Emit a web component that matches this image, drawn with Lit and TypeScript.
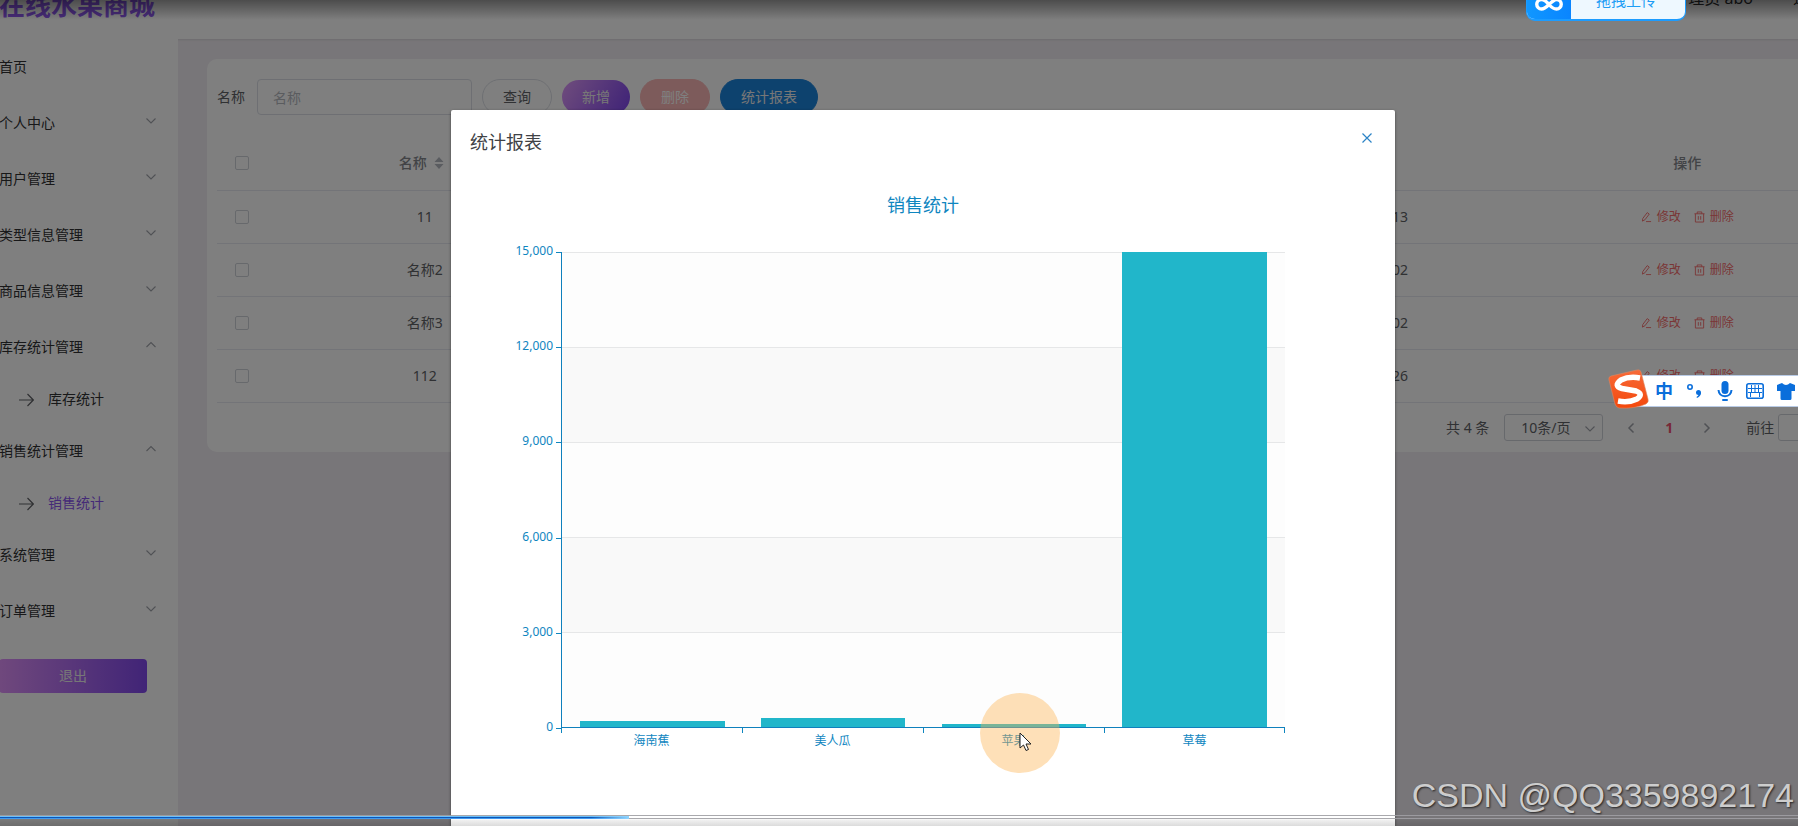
import { LitElement, html, css } from "lit";
import { customElement, property } from "lit/decorators.js";
import { classMap } from "lit/directives/class-map.js";

const FONT = css`"Noto Sans", "Noto Sans CJK SC", sans-serif`;

interface MenuEntry {
  label: string;
  arrow?: "up" | "down";
  child?: string;
  active?: boolean;
}

const MENU: MenuEntry[] = [
  { label: "首页" },
  { label: "个人中心", arrow: "down" },
  { label: "用户管理", arrow: "down" },
  { label: "类型信息管理", arrow: "down" },
  { label: "商品信息管理", arrow: "down" },
  { label: "库存统计管理", arrow: "up", child: "库存统计" },
  { label: "销售统计管理", arrow: "up", child: "销售统计", active: true },
  { label: "系统管理", arrow: "down" },
  { label: "订单管理", arrow: "down" },
];

const ROWS = [
  { name: "11", fruit: "海南蕉", count: 200, date: "2023-04-13" },
  { name: "名称2", fruit: "美人瓜", count: 300, date: "2023-04-02" },
  { name: "名称3", fruit: "苹果", count: 100, date: "2023-04-02" },
  { name: "112", fruit: "草莓", count: 15000, date: "2023-04-26" },
];

const chevron = (dir: string) => html`<svg class="chev" viewBox="0 0 12 12" width="12" height="12">
  <path d=${dir === "up" ? "M1.5 8 6 3.5 10.5 8" : "M1.5 3.5 6 8 10.5 3.5"} fill="none" stroke="#a0a3aa" stroke-width="1.1" />
</svg>`;

@customElement("side-menu")
export class SideMenu extends LitElement {
  static styles = css`
    :host { display: block; width: 179px; flex: none; background: #fff; font: 14px/20px ${FONT}; color: #303133; }
    .item, .sub { display: flex; align-items: center; color: inherit; text-decoration: none; }
    .item { height: 56px; justify-content: space-between; padding-right: 21px; }
    .chev { margin-bottom: 4px; }
    .sub { height: 48px; padding-left: 20px; gap: 14px; }
    .sub svg { margin-top: 2px; }
    .active { color: #8a55ef; }
    .logout { display: block; width: 148px; height: 34px; margin-top: 20px; border: 0; border-radius: 4px; color: #eee;
      font: inherit; background: linear-gradient(90deg, #e091fa, #8249ee); }
  `;
  render() {
    return html`<nav>
        ${MENU.map(
          (m) => html`<a class="item" href="#">${m.label}${m.arrow ? chevron(m.arrow) : ""}</a>
            ${m.child
              ? html`<a class=${classMap({ sub: true, active: !!m.active })} href="#">
                  <svg viewBox="0 0 15 14" width="15" height="14">
                    <path d="M0 7H14M8.500 1 14.300 7 8.500 13" fill="none" stroke="#606266" stroke-width="1.2" />
                  </svg>${m.child}</a>`
              : ""}`
        )}
      </nav>
      <button class="logout">退出</button>`;
  }
}

@customElement("record-table")
export class RecordTable extends LitElement {
  static styles = css`
    :host { display: block; font: 14px/20px ${FONT}; color: #606266; }
    table { width: 100%; table-layout: fixed; border-collapse: collapse; }
    th, td { height: 52px; padding: 0; text-align: center; border-bottom: 1px solid #e6e9f0; }
    th { height: 54px; font-weight: 500; color: #84878d; }
    .pick { width: 50px; }
    .pick input { appearance: none; display: block; width: 14px; height: 14px; margin: 0 auto; border: 1px solid #cfd2d9; border-radius: 2px; background: #fff; }
    .sort { margin-left: 7px; vertical-align: -1px; }
    .sort + span { display: inline-block; width: 7px; }
    .ops { display: flex; justify-content: center; gap: 13px; }
    .ops button { display: flex; align-items: center; gap: 5px; padding: 0; border: 0; background: none; color: #f56c6c; font: 12px/20px ${FONT}; }
  `;
  render() {
    const sort = html`<svg class="sort" viewBox="0 0 10 12" width="10" height="12">
        <path d="M5 0 9.500 5H.5zM5 12 .5 7H9.500z" fill="#b4b8c0" /></svg><span></span>`;
    return html`<table>
      <thead>
        <tr>
          <th class="pick"><input type="checkbox" aria-label="全选" /></th>
          <th>名称${sort}</th><th>水果${sort}</th><th>数量${sort}</th><th>日期</th><th>操作</th>
        </tr>
      </thead>
      <tbody>
        ${ROWS.map(
          (r) => html`<tr>
            <td class="pick"><input type="checkbox" aria-label=${r.name} /></td>
            <td>${r.name}</td><td>${r.fruit}</td><td>${r.count}</td><td>${r.date}</td>
            <td>
              <div class="ops">
                <button>
                  <svg viewBox="0 0 12 12" width="11" height="12" fill="none" stroke="#f56c6c">
                    <path d="M1.500 10.500 2 7.500 6.800 1.200 9 2.800 4.300 9zM5.500 11H11" />
                  </svg>修改
                </button>
                <button>
                  <svg viewBox="0 0 12 12" width="11" height="12" fill="none" stroke="#f56c6c">
                    <path d="M.5 2.500H11.500M3.500 2.500V.5H8.500V2.500M1.500 2.500V11.500H10.500V2.500M4.700 5V9M7.300 5V9" />
                  </svg>删除
                </button>
              </div>
            </td>
          </tr>`
        )}
      </tbody>
    </table>`;
  }
}

@customElement("bar-chart")
export class BarChart extends LitElement {
  @property({ type: Number }) max = 15000;
  @property({ type: Number }) step = 3000;
  static styles = css`
    :host { display: block; font: 12px/16px ${FONT}; color: #0f86bf; }
    h3 { margin: 0; text-align: center; font: 18px/24px ${FONT}; }
    .plot { display: grid; grid-template-columns: 83px 1fr; margin: 35px 110px 0 28px; }
    .scale { position: relative; border-right: 1px solid #0f80bd; }
    .scale span { position: absolute; right: 8px; line-height: 20px; margin-top: -11px; }
    .scale span::after { content: ""; position: absolute; right: -8px; top: 11px; width: 5px; height: 1px; background: #0f86bf; }
    .area { display: grid; grid-auto-rows: 95px; position: relative; border-bottom: 1px solid #0f80bd; }
    .band { border-top: 1px solid #e6e7e8; background: #fdfdfd; }
    .band:nth-child(even) { background: #f9f9f9; }
    .bars { position: absolute; inset: 0; display: flex; align-items: flex-end; }
    .slot { flex: 1; height: 100%; display: flex; align-items: flex-end; justify-content: center; }
    .bar { width: 80%; background: #21b6ca; }
    .names { grid-column: 2; display: flex; margin-left: -1px; }
    .names span { flex: 1; padding-top: 5px; text-align: center; background: linear-gradient(#0f86bf, #0f86bf) 0 0 / 1px 5px no-repeat; }
    .names span:last-child { background: linear-gradient(#0f86bf, #0f86bf) 0 0 / 1px 5px no-repeat, linear-gradient(#0f86bf, #0f86bf) 100% 0 / 1px 5px no-repeat; }
  `;
  render() {
    const n = this.max / this.step;
    const ticks = Array.from({ length: n + 1 }, (_, i) => this.max - i * this.step);
    return html`<h3>销售统计</h3>
      <div class="plot">
        <div class="scale">
          ${ticks.map((t, i) => html`<span style="top:${(i / n) * 100}%">${t.toLocaleString("en-US")}</span>`)}
        </div>
        <div class="area">
          ${ticks.slice(1).map(() => html`<div class="band"></div>`)}
          <div class="bars">
            ${ROWS.map((r) => html`<div class="slot"><div class="bar" style="height:${(r.count / this.max) * 100}%"></div></div>`)}
          </div>
        </div>
        <div class="names">${ROWS.map((r) => html`<span>${r.fruit}</span>`)}</div>
      </div>`;
  }
}

@customElement("ime-bar")
export class ImeBar extends LitElement {
  static styles = css`
    :host { display: flex; align-items: center; height: 30px; padding-left: 37px; gap: 13px; background: #fff;
      border: 1px solid #b9cbe6; border-right: 0; color: #0a6edb; font: bold 18px/30px ${FONT}; }
    .logo { position: absolute; left: -10px; top: -8px; }
    svg { flex: none; }
  `;
  render() {
    return html`
      <svg class="logo" viewBox="0 0 42 42" width="42" height="42">
        <defs><linearGradient id="o" x1="0" y1="0" x2="0" y2="1"><stop offset="0" stop-color="#f76a38" /><stop offset="1" stop-color="#f4480c" /></linearGradient></defs>
        <path d="M3 8 29 2Q32 1 33 4L40 31Q41 34 38 36Q27 41 11 40Q8 39 7 36L1 12Q0 9 3 8Z" fill="url(#o)" stroke="#d98a66" stroke-width=".6" />
        <path d="M32 10Q21 8 13 12Q5 18 14 20.500L28 23Q36 26 29 31Q21 35 10 33" fill="none" stroke="#fff" stroke-width="5.500" />
      </svg>
      <span>中</span>
      <svg viewBox="0 0 18 18" width="18" height="18"><circle cx="4" cy="5" r="2.200" fill="none" stroke="#0a6edb" stroke-width="1.600" /><circle cx="12.500" cy="10.500" r="2.500" fill="#0a6edb" /><path d="M15 10.500Q15 14 11 16L10.500 15Q13 13.500 12.500 12Z" fill="#0a6edb" /></svg>
      <svg viewBox="0 0 16 20" width="16" height="20"><rect x="4.500" y="0" width="7" height="13" rx="3.500" fill="#0a6edb" /><path d="M1.500 9Q2 15 8 15.200 14 15 14.500 9" fill="none" stroke="#0a6edb" stroke-width="2" /><rect x="5" y="18" width="6" height="2" rx="1" fill="#0a6edb" /></svg>
      <svg viewBox="0 0 18 16" width="18" height="16"><rect x=".8" y=".8" width="16.400" height="14.400" rx="2" fill="none" stroke="#0a6edb" stroke-width="1.600" /><path d="M2 5.500H16M2 9.500H16M5.500 2V9.500M9 2V9.500M12.500 2V9.500M4.500 9.500V14M13.500 9.500V14" stroke="#0a6edb" stroke-width="1" /></svg>
      <svg viewBox="0 0 18 17" width="18" height="17"><path d="M0 2 5 0Q9 4 13 0L18 2V8H14.500V15.500Q14.500 17 13 17H5Q3.500 17 3.500 15.500V8H0Z" fill="#0a6edb" /></svg>
    `;
  }
}

@customElement("app-root")
export class AppRoot extends LitElement {
  static styles = css`
    :host { display: block; position: relative; height: 100vh; overflow: hidden; background: #f1edf3; font: 14px/20px ${FONT}; color: #606266; }
    .page { width: calc(100% + 48px); margin: -30px 0 0 -1px; }
    header { display: flex; align-items: center; justify-content: space-between; height: 69px; background: #fff; box-shadow: 0 1px 2px #d8d6da; }
    h1 { margin: 0; font: bold 26px/32px ${FONT}; color: #9058f3; }
    .user { display: flex; gap: 40px; padding: 0 20px 14px 0; font-size: 16px; color: #303133; }
    .body { display: flex; align-items: flex-start; }
    side-menu { height: calc(100vh - 39px); }
    main { flex: 1; min-width: 0; margin: 20px 0 0 29px; }
    .card { padding: 20px 0 11px 10px; background: #fff; border-radius: 10px; }
    form { display: flex; align-items: center; height: 36px; margin-bottom: 21px; }
    label { margin-right: 12px; }
    .text { box-sizing: border-box; width: 215px; height: 36px; padding: 0 15px; border: 1px solid #dcdfe6; border-radius: 4px; font: inherit; background: #fff; }
    .text::placeholder { color: #b5b8bf; opacity: 1; }
    .btn { height: 36px; margin-left: 10px; padding: 0 20px; border: 1px solid #dcdfe6; border-radius: 18px; background: #fff; color: #606266; font: inherit; }
    .add { height: 34px; border: 0; color: #eee; background: linear-gradient(120deg, #e09afa, #7c44ee); }
    .del { border-color: #fab6b6; background: #fab6b6; color: #fff; }
    .stat { border-color: #1b84dc; background: #1b84dc; color: #eee; }
    .pager { display: flex; align-items: center; height: 27px; margin-top: 11px; padding-left: 1229px; }
    .size { box-sizing: border-box; width: 99px; height: 27px; margin: 0 22px 0 15px; padding: 0 16px; border: 1px solid #cfd2d9; border-radius: 3px; background: #fff; appearance: none; font: inherit; color: inherit; }
    .pick { position: relative; }
    .pick svg { position: absolute; right: 29px; top: 9px; }
    .pager button { display: flex; padding: 0; border: 0; background: none; }
    .cur { width: 64px; text-align: center; color: #f0506e; font-weight: bold; }
    .goto { margin: 0 4px 0 33px; }
    .jump { box-sizing: border-box; width: 46px; height: 27px; border: 1px solid #cfd2d9; border-radius: 3px; text-align: center; font: inherit; color: inherit; }

    .mask { position: absolute; inset: 0 -48px 0 0; padding-top: 110px; background: rgba(0, 0, 0, 0.5); }
    .dialog { width: 944px; max-width: 90%; height: 100%; margin: 0 auto; background: #fff; border-radius: 2px 2px 0 0; box-shadow: 0 1px 3px rgba(0, 0, 0, 0.5); }
    .head { display: flex; justify-content: space-between; align-items: center; padding: 20px 22px 0 19px; }
    .head h2 { margin: 0; font: 18px/24px ${FONT}; color: #404246; }
    .close { display: flex; padding: 0 0 8px; border: 0; background: none; }
    bar-chart { margin-top: 39px; }
    .shade { position: absolute; inset: 0 0 auto; height: 20px; background: linear-gradient(rgba(0, 0, 0, 0.4), rgba(0, 0, 0, 0)); }
    .drop { position: absolute; left: 1526px; top: -19px; display: flex; width: 160px; height: 40px; box-sizing: border-box; border: 1px solid #1c9cff; border-bottom-width: 2px; border-radius: 9px; overflow: hidden; background: #eef8ff; color: #1d9df5; font: 15px/36px ${FONT}; padding: 0; }
    .drop span { flex: 1; padding-right: 4px; text-align: center; }
    .drop svg { background: linear-gradient(90deg, #1097ff, #0a85ff); }
    ime-bar { position: absolute; left: 1617px; right: 0; top: 375px; }
    .halo { position: absolute; left: 980px; top: 693px; width: 80px; height: 80px; border-radius: 50%; background: rgba(253, 177, 77, 0.4); }
    .halo svg { position: absolute; left: 39px; top: 39px; }
    .mark { position: absolute; right: 4px; bottom: 11px; color: #cdcdcd; font: 34px/40px "Liberation Sans", sans-serif; text-shadow: 1px 1px 2px rgba(0, 0, 0, 0.7); }
    .seek { position: absolute; inset: auto 0 0; height: 11px; background: linear-gradient(rgba(0, 0, 0, 0) 4px, rgba(0, 0, 0, 0.06) 5px, rgba(0, 0, 0, 0.14)); }
    .track { height: 2px; border: 1px solid rgba(160, 160, 164, 0.9); border-width: 1px 0; }
    .done { width: 35%; height: 3px; background: linear-gradient(90deg, transparent 94%, #8fd4ff), linear-gradient(#6cc0f8 1px, #0c56b8 1px 2px, #3f9af0 2px); }
  `;
  render() {
    return html`
      <div class="page">
        <header><h1>在线水果商城</h1><div class="user"><span>管理员 abo</span><span>退出</span></div></header>
        <div class="body">
          <side-menu></side-menu>
          <main>
            <div class="card">
              <form>
                <label for="q">名称</label><input id="q" class="text" placeholder="名称" />
                <button type="button" class="btn">查询</button>
                <button type="button" class="btn add">新增</button>
                <button type="button" class="btn del">删除</button>
                <button type="button" class="btn stat">统计报表</button>
              </form>
              <record-table></record-table>
              <div class="pager">
                <span>共 4 条</span>
                <span class="pick"><select class="size" aria-label="每页条数"><option>10条/页</option></select>${chevron("down")}</span>
                <button aria-label="上一页"><svg viewBox="0 0 12 12" width="12" height="12"><path d="M8.500 1.500 4 6 8.500 10.500" fill="none" stroke="#a0a3aa" stroke-width="1.500" /></svg></button>
                <span class="cur">1</span>
                <button aria-label="下一页"><svg viewBox="0 0 12 12" width="12" height="12"><path d="M3.500 1.500 8 6 3.500 10.500" fill="none" stroke="#a0a3aa" stroke-width="1.500" /></svg></button>
                <label class="goto" for="p">前往</label><input id="p" class="jump" value="1" />
              </div>
            </div>
          </main>
        </div>
      </div>
      <div class="mask">
        <div class="dialog" role="dialog" aria-label="统计报表">
          <div class="head">
            <h2>统计报表</h2>
            <button class="close" aria-label="关闭"><svg viewBox="0 0 12 12" width="12" height="12"><path d="M1.500 1.500 10.500 10.500M10.500 1.500 1.500 10.500" stroke="#2b83c6" stroke-width="1.200" /></svg></button>
          </div>
          <bar-chart></bar-chart>
        </div>
      </div>
      <div class="shade"></div>
      <button class="drop">
        <svg viewBox="0 0 44 38" width="44" height="38"><path d="M22 22.500C19 19 17 17.500 14.500 17.500A4.500 4.500 0 0 0 14.500 27C17.500 27 19 25.500 22 22.500S27 17.500 29.500 17.500A4.500 4.500 0 0 1 29.500 27C27 27 25 26 22 22.500" fill="none" stroke="#fff" stroke-width="3.400" /></svg>
        <span>拖拽上传</span>
      </button>
      <ime-bar></ime-bar>
      <div class="halo"><svg viewBox="0 0 13 20" width="13" height="20"><path d="M1 1V16L4.500 13 7 18.500 9.500 17.500 7 12H12Z" fill="#fff" stroke="#222" /></svg></div>
      <div class="seek"><div class="track"><div class="done"></div></div></div>
      <div class="mark">CSDN @QQ3359892174</div>
    `;
  }
}
